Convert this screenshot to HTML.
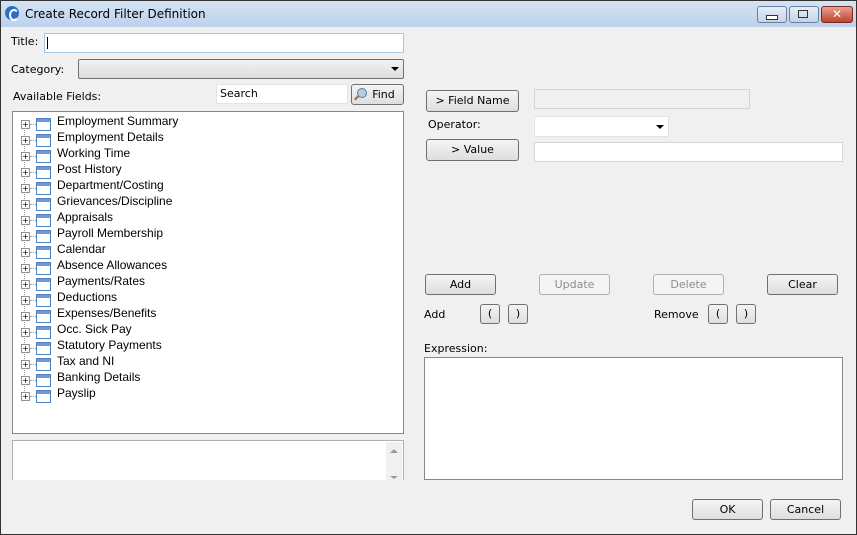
<!DOCTYPE html><html><head><style>
body{margin:0;width:857px;height:535px;overflow:hidden;font-family:"DejaVu Sans","Liberation Sans",sans-serif;font-size:11px;color:#000;position:relative;background:#f0f0f0}
.a{position:absolute}
.win{left:0;top:0;width:855px;height:533px;border:1px solid #333;background:#f0f0f0}
.tb{left:1px;top:1px;width:855px;height:26px;background:linear-gradient(#d5e3f3,#bcd2ec)}
.btn{position:absolute;border:1px solid #707070;border-radius:3px;background:linear-gradient(#f4f4f4,#dedede);text-align:center;box-sizing:border-box}
.dis{border-color:#adb2b5;color:#8d8d8d;background:#f4f4f4}
.inp{position:absolute;background:#fff;border:1px solid #abadb3;box-sizing:border-box}
.t{position:absolute;left:57px;font-family:"Liberation Sans",sans-serif;font-size:12px}
.ic{position:absolute;left:36px;width:13px;height:11px;border:1px solid #4f7fc4;background:linear-gradient(#6e9ad8 0 3px,#fff 3px);}
.pl{position:absolute;left:21px;width:7px;height:7px;border:1px solid #919191;background:#fff;font-size:8px;line-height:7px;text-align:center;color:#000}
</style></head><body>
<div class="a win"></div>
<div class="a tb"></div>
<div class="a" style="left:5px;top:6px;width:14px;height:14px;border-radius:50%;background:#2a6fc2"></div>
<div class="a" style="left:9px;top:9px;width:6px;height:8px;border-radius:50%;border:2px solid #fff;border-right-color:transparent"></div>
<div class="a" style="left:25px;top:7px;font-size:12px">Create Record Filter Definition</div>
<div class="a" style="left:757px;top:6px;width:28px;height:15px;border:1px solid #6b7f99;border-radius:3px;background:linear-gradient(#e6eef8,#c2d3ea)"></div>
<div class="a" style="left:766px;top:15px;width:10px;height:3px;border:1px solid #333;background:#fff"></div>
<div class="a" style="left:789px;top:6px;width:28px;height:15px;border:1px solid #6b7f99;border-radius:3px;background:linear-gradient(#e6eef8,#c2d3ea)"></div>
<div class="a" style="left:798px;top:10px;width:8px;height:6px;border:1px solid #333"></div>
<div class="a" style="left:821px;top:6px;width:30px;height:15px;border:1px solid #7a2a20;border-radius:3px;background:linear-gradient(#e6a190,#c1432e);color:#fff;text-align:center;font-weight:bold;font-size:12px;line-height:15px">✕</div>

<div class="a" style="left:11px;top:35px">Title:</div>
<div class="inp" style="left:44px;top:33px;width:360px;height:20px;border-color:#a9c4e4"><div style="position:absolute;left:2px;top:3px;width:1px;height:12px;background:#000"></div></div>
<div class="a" style="left:11px;top:63px">Category:</div>
<div class="inp" style="left:78px;top:59px;width:326px;height:20px;border-color:#707070;border-radius:2px;background:linear-gradient(#f2f2f2,#dcdcdc)"><div class="a" style="right:4px;top:7px;border:4px solid transparent;border-top:4px solid #000"></div></div>
<div class="a" style="left:13px;top:90px">Available Fields:</div>
<div class="inp" style="left:216px;top:84px;width:132px;height:20px;border-color:#e3e3e3;padding:2px 3px">Search</div>
<div class="btn" style="left:351px;top:84px;width:53px;height:21px;line-height:19px;padding-left:12px">Find</div>
<div class="a" style="left:357px;top:88px;width:8px;height:8px;border-radius:50%;border:1.5px solid #5577aa;background:#bcd"></div>
<div class="a" style="left:354px;top:97px;width:5px;height:2px;background:#a65;transform:rotate(-45deg)"></div>

<div class="inp" style="left:12px;top:111px;width:392px;height:323px;border-color:#828790"></div>
<div class="a" style="left:24px;top:121px;height:272px;border-left:1px dotted #a0a0a0"></div>
<div id="tree"></div>
<div class="inp" style="left:12px;top:440px;width:392px;height:40px;border-color:#b0b0b0;border-bottom:none"></div>
<div class="a" style="left:386px;top:442px;width:16px;height:38px;background:#f0f0f0"></div>
<div class="a" style="left:390px;top:449px;border:4px solid transparent;border-bottom:4px solid #999;border-top:none"></div>
<div class="a" style="left:390px;top:476px;border:4px solid transparent;border-top:3px solid #999;border-bottom:none"></div>

<div class="btn" style="left:426px;top:90px;width:93px;height:22px;line-height:20px">&gt; Field Name</div>
<div class="inp" style="left:534px;top:89px;width:216px;height:20px;background:#f0f0f0;border-color:#d5d5d5"></div>
<div class="a" style="left:428px;top:118px">Operator:</div>
<div class="inp" style="left:534px;top:116px;width:135px;height:21px;border-color:#e3e3e3"><div class="a" style="right:4px;top:8px;border:4px solid transparent;border-top:4px solid #000"></div></div>
<div class="btn" style="left:426px;top:139px;width:93px;height:22px;line-height:20px">&gt; Value</div>
<div class="inp" style="left:534px;top:142px;width:309px;height:20px;border-color:#d5d5d5"></div>

<div class="btn" style="left:425px;top:274px;width:71px;height:21px;line-height:19px">Add</div>
<div class="btn dis" style="left:539px;top:274px;width:71px;height:21px;line-height:19px">Update</div>
<div class="btn dis" style="left:653px;top:274px;width:71px;height:21px;line-height:19px">Delete</div>
<div class="btn" style="left:767px;top:274px;width:71px;height:21px;line-height:19px">Clear</div>
<div class="a" style="left:424px;top:308px">Add</div>
<div class="btn" style="left:480px;top:304px;width:20px;height:20px;line-height:18px">(</div>
<div class="btn" style="left:508px;top:304px;width:20px;height:20px;line-height:18px">)</div>
<div class="a" style="left:654px;top:308px">Remove</div>
<div class="btn" style="left:708px;top:304px;width:20px;height:20px;line-height:18px">(</div>
<div class="btn" style="left:736px;top:304px;width:20px;height:20px;line-height:18px">)</div>
<div class="a" style="left:424px;top:342px">Expression:</div>
<div class="inp" style="left:424px;top:357px;width:419px;height:123px;border-color:#828790"></div>
<div class="btn" style="left:692px;top:499px;width:71px;height:21px;line-height:19px">OK</div>
<div class="btn" style="left:770px;top:499px;width:71px;height:21px;line-height:19px">Cancel</div>

<script>
var n=["Employment Summary","Employment Details","Working Time","Post History","Department/Costing","Grievances/Discipline","Appraisals","Payroll Membership","Calendar","Absence Allowances","Payments/Rates","Deductions","Expenses/Benefits","Occ. Sick Pay","Statutory Payments","Tax and NI","Banking Details","Payslip"];
var h="";n.forEach(function(s,i){var y=121+16*i;h+='<div class="pl" style="top:'+(y-1)+'px">+</div><div class="a" style="left:30px;top:'+(y+3)+'px;width:6px;border-top:1px dotted #a0a0a0"></div><div class="ic" style="top:'+(y-3)+'px"></div><div class="t" style="line-height:14px;top:'+(y-7)+'px">'+s+'</div>'});
document.getElementById("tree").innerHTML=h;
</script>
</body></html>
